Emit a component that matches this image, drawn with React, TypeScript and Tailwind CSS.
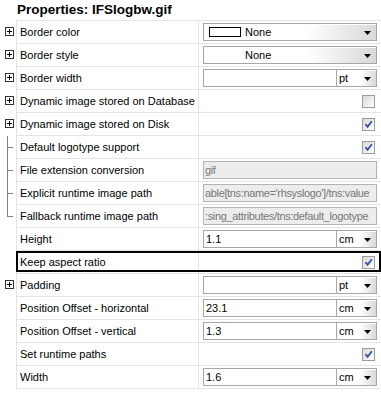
import React from 'react';

type Row = {
  label: string;
  tree?: 'plus' | 'mid' | 'end';
  kind: 'color' | 'style' | 'unit' | 'check' | 'disabled';
  value?: string;
  unit?: string;
  checked?: boolean;
  focused?: boolean;
};

const rows: Row[] = [
  { label: 'Border color', tree: 'plus', kind: 'color' },
  { label: 'Border style', tree: 'plus', kind: 'style' },
  { label: 'Border width', tree: 'plus', kind: 'unit', value: '', unit: 'pt' },
  { label: 'Dynamic image stored on Database', tree: 'plus', kind: 'check', checked: false },
  { label: 'Dynamic image stored on Disk', tree: 'plus', kind: 'check', checked: true },
  { label: 'Default logotype support', tree: 'mid', kind: 'check', checked: true },
  { label: 'File extension conversion', tree: 'mid', kind: 'disabled', value: 'gif' },
  { label: 'Explicit runtime image path', tree: 'mid', kind: 'disabled', value: "able[tns:name='rhsyslogo']/tns:value" },
  { label: 'Fallback runtime image path', tree: 'end', kind: 'disabled', value: ':sing_attributes/tns:default_logotype' },
  { label: 'Height', kind: 'unit', value: '1.1', unit: 'cm' },
  { label: 'Keep aspect ratio', kind: 'check', checked: true, focused: true },
  { label: 'Padding', tree: 'plus', kind: 'unit', value: '', unit: 'pt' },
  { label: 'Position Offset - horizontal', kind: 'unit', value: '23.1', unit: 'cm' },
  { label: 'Position Offset - vertical', kind: 'unit', value: '1.3', unit: 'cm' },
  { label: 'Set runtime paths', kind: 'check', checked: true },
  { label: 'Width', kind: 'unit', value: '1.6', unit: 'cm' },
];

const Arrow = () => (
  <svg width="7" height="4" viewBox="0 0 7 4" className="block">
    <path d="M0 0 H7 L3.5 4 Z" fill="#000" />
  </svg>
);

// dropdown with grey fade to the right and arrow at the end
const Select = ({ children, className = '' }: { children?: React.ReactNode; className?: string }) => (
  <div
    className={`h-[18px] flex items-center border border-[#a7a7a7] bg-linear-to-r from-white from-60% to-[#d9d9d9] shadow-[inset_1px_1px_0_#ffffff] ${className}`}
  >
    <div className="flex-1 flex items-center overflow-hidden whitespace-nowrap">{children}</div>
    <div className="w-[17px] h-full flex items-center justify-center pt-[2px]">
      <Arrow />
    </div>
  </div>
);

const Checkbox = ({ checked }: { checked?: boolean }) => (
  <div className="w-[13px] h-[13px] border border-[#9c9c9c] bg-linear-to-br from-[#d8d8d4] to-white flex items-center justify-center">
    {checked && (
      <svg width="11" height="11" viewBox="0 0 11 11">
        <path d="M2.5 5.2 L4.6 7.8 L8.8 2.2" fill="none" stroke="#3553a8" strokeWidth="1.9" />
      </svg>
    )}
  </div>
);

const TreeMark = ({ tree }: { tree?: Row['tree'] }) => {
  if (tree === 'plus') {
    return (
      <div className="absolute left-[5px] top-[6px] w-[9px] h-[9px] border border-[#333] bg-white">
        <div className="absolute left-[1px] top-[3px] w-[5px] h-px bg-black" />
        <div className="absolute left-[3px] top-[1px] w-px h-[5px] bg-black" />
      </div>
    );
  }
  if (tree === 'mid' || tree === 'end') {
    return (
      <>
        <div className={`absolute left-[7px] top-0 w-px bg-[#808080] ${tree === 'mid' ? 'h-[23px]' : 'h-[11px]'}`} />
        <div className="absolute left-[7px] top-[11px] w-[6px] h-px bg-[#808080]" />
      </>
    );
  }
  return null;
};

const Value = ({ row }: { row: Row }) => {
  if (row.kind === 'color') {
    return (
      <Select className="w-full">
        <div className="ml-[5px] mr-[4px] w-[32px] h-[10px] border border-black bg-white" />
        <span>None</span>
      </Select>
    );
  }
  if (row.kind === 'style') {
    return (
      <Select className="w-full">
        <div className="ml-[5px] mr-[4px] w-[32px] h-[10px]" />
        <span>None</span>
      </Select>
    );
  }
  if (row.kind === 'unit') {
    return (
      <div className="flex w-full">
        <div className="flex-1 h-[18px] border border-[#a7a7a7] bg-white flex items-center pl-[2px]">{row.value}</div>
        <Select className="w-[41px] -ml-px">
          <span className="pl-[2px]">{row.unit}</span>
        </Select>
      </div>
    );
  }
  if (row.kind === 'disabled') {
    return (
      <div className="w-full h-[18px] border border-[#b3b3b3] bg-[#ededed] text-[#777] flex items-center pl-[1px] overflow-hidden whitespace-nowrap tracking-[-0.35px]">
        {row.value}
      </div>
    );
  }
  return (
    <div className="w-full flex justify-end pr-[2px]">
      <Checkbox checked={row.checked} />
    </div>
  );
};

export default function App() {
  return (
    <div
      className="w-[381px] h-[396px] bg-white text-black text-[11px] leading-[13px] overflow-hidden"
      style={{ fontFamily: '"Liberation Sans", Arial, sans-serif' }}
    >
      <div className="h-[20px] pl-[17px] pt-[2px] font-bold text-[13.5px] leading-[15px]">Properties: IFSlogbw.gif</div>
      <div className="border-t border-[#e4e4e4] ml-[16px]" />
      {rows.map((row) => (
        <div key={row.label} className="flex h-[23px]">
          <div className="relative w-[16px] shrink-0">
            <TreeMark tree={row.tree} />
          </div>
          <div className="relative flex-1 flex border-l border-b border-[#e4e4e4]">
            <div className="w-[182px] shrink-0 border-r border-[#e4e4e4] flex items-center pl-[3px] whitespace-nowrap">
              {row.label}
            </div>
            <div className="flex-1 flex items-center pl-[4px] pr-[4px]">
              <Value row={row} />
            </div>
            {row.focused && <div className="absolute -left-px top-0 right-0 bottom-[1px] border-2 border-black pointer-events-none" />}
          </div>
        </div>
      ))}
    </div>
  );
}
